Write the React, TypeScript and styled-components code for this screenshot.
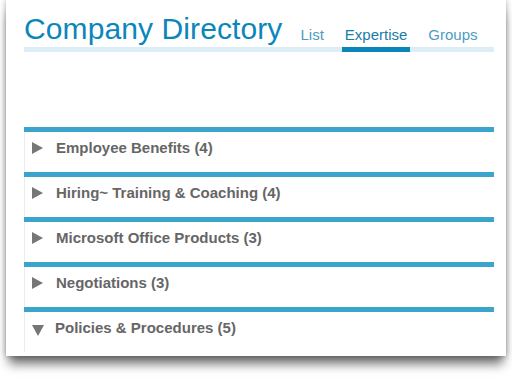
import React from "react";
import styled, { createGlobalStyle } from "styled-components";

const Global = createGlobalStyle`
  html, body { margin: 0; padding: 0; background: #ffffff; }
  body { font-family: "Liberation Sans", Arial, Helvetica, sans-serif; }
`;

const Page = styled.div`
  width: 512px;
  height: 380px;
  padding: 0 6px;
  box-sizing: border-box;
  overflow: hidden;
`;

const Card = styled.div`
  background: #ffffff;
  height: 356px;
  padding: 14px 12px 0 18px;
  box-sizing: border-box;
  box-shadow: 0 11px 10px -3px rgba(0, 0, 0, 0.55), 0 0 6px rgba(0, 0, 0, 0.35);
  overflow: hidden;
`;

const Header = styled.div`
  display: flex;
  align-items: flex-end;
  gap: 15px;
  border-bottom: 5px solid #dcedf4;
`;

const Title = styled.h1`
  margin: 0 0 3px 0;
  font-size: 30px;
  font-weight: normal;
  line-height: 30px;
  color: #0a86ba;
  letter-spacing: 0.1px;
`;

const Tabs = styled.div`
  display: flex;
  gap: 15px;
`;

const Tab = styled.div<{ $active?: boolean }>`
  font-size: 15px;
  line-height: 17px;
  padding: 0 3px 4px;
  margin-bottom: -5px;
  color: ${(p) => (p.$active ? "#1a7ca8" : "#4d9cc3")};
  border-bottom: 5px solid ${(p) => (p.$active ? "#0a85b8" : "transparent")};
`;

const List = styled.div`
  margin-top: 75px;
  display: flex;
  flex-direction: column;
`;

const Section = styled.div`
  border-top: 5px solid #3aa4cc;
`;

const Row = styled.div`
  height: 40px;
  border-left: 1px solid #ececec;
  display: flex;
  align-items: flex-start;
  padding: 8px 0 0 7px;
  box-sizing: border-box;
  gap: 11px;
`;

const Arrow = styled.span<{ $open?: boolean }>`
  width: 0;
  height: 0;
  flex: none;
  ${(p) =>
    p.$open
      ? `border-left: 6.5px solid transparent; border-right: 6.5px solid transparent; border-top: 11px solid #767676; margin-top: 5px; margin-left: 0;`
      : `border-top: 6px solid transparent; border-bottom: 6px solid transparent; border-left: 11px solid #767676; margin-top: 2px; margin-left: 0; margin-right: 2px;`}
`;

const Label = styled.span`
  font-size: 15px;
  font-weight: bold;
  line-height: 16px;
  color: #666666;
`;

const items = [
  { label: "Employee Benefits (4)" },
  { label: "Hiring~ Training & Coaching (4)" },
  { label: "Microsoft Office Products (3)" },
  { label: "Negotiations (3)" },
  { label: "Policies & Procedures (5)", open: true },
];

export default function App() {
  return (
    <Page>
      <Global />
      <Card>
        <Header>
          <Title>Company Directory</Title>
          <Tabs>
            <Tab>List</Tab>
            <Tab $active>Expertise</Tab>
            <Tab>Groups</Tab>
          </Tabs>
        </Header>
        <List>
          {items.map((it) => (
            <Section key={it.label}>
              <Row>
                <Arrow $open={it.open} />
                <Label>{it.label}</Label>
              </Row>
            </Section>
          ))}
        </List>
      </Card>
    </Page>
  );
}
